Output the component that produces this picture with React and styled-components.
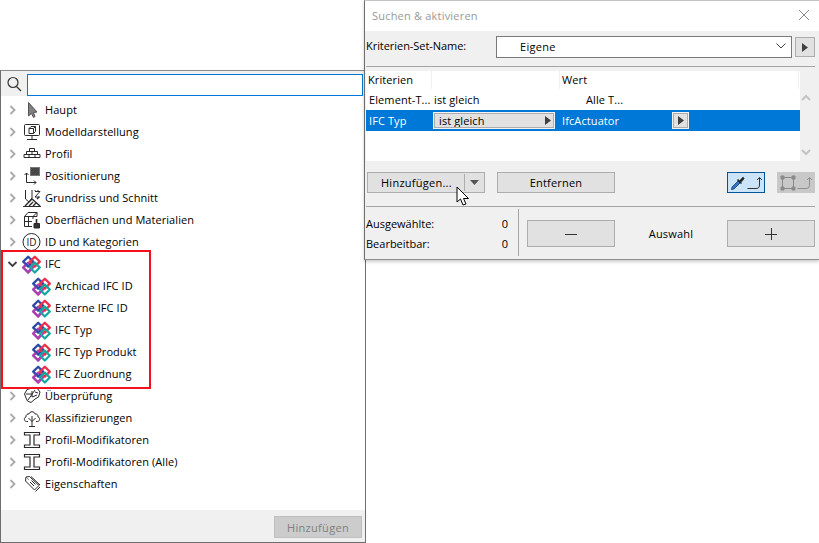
import React from "react";
import styled, { createGlobalStyle } from "styled-components";

const Global = createGlobalStyle`
  html, body { margin: 0; padding: 0; background: #fff; }
  body { font-family: "Open Sans", "Noto Sans", sans-serif; font-size: 11px; color: #000; }
`;

const Desk = styled.div`
  position: relative; width: 819px; height: 543px; overflow: hidden; background: #fff;
`;

/* ---------- left window ---------- */
const Panel = styled.section`
  position: absolute; left: 0; top: 70px; width: 366px; height: 473px; box-sizing: border-box;
  display: flex; flex-direction: column; background: #fff;
  border: 1px solid #6e6e6e; border-top-color: #8a8a8a;
`;
const SearchBar = styled.div`
  height: 25px; flex: none; display: flex; align-items: flex-start; background: #f0f0f0;
`;
const SearchIconBox = styled.div`
  width: 26px; height: 25px; display: flex; align-items: center; justify-content: center;
`;
const SearchInput = styled.div`
  width: 336px; height: 22px; box-sizing: border-box; margin-top: 3px; background: #fff; border: 1px solid #0078d7;
`;
const Tree = styled.div`
  flex: 1; padding-top: 3px; display: flex; flex-direction: column;
`;
const Row = styled.div`
  height: 22px; flex: none; display: flex; align-items: center; padding-left: ${p => (p.$child ? 31 : 6)}px;
  white-space: nowrap; letter-spacing: 0.06px;
`;
const RowLabel = styled.span`
  margin-bottom: 2px;
`;
const Chevron = styled.span`
  width: 12px; height: 12px; display: flex; flex: none; margin-right: 3px;
`;
const IconSlot = styled.span`
  width: 20px; height: 20px; flex: none; display: flex; align-items: center; justify-content: center; margin-right: 3px;
`;
const Group = styled.div`
  position: relative;
`;
const RedFrame = styled.div`
  position: absolute; left: 0; top: -3px; width: 150px; height: 139px; box-sizing: border-box;
  border: 2px solid #f5101c; pointer-events: none;
`;
const PanelFooter = styled.div`
  height: 32px; box-sizing: border-box; flex: none; background: #f0f0f0; display: flex; justify-content: flex-end; align-items: flex-start; padding: 6px 3px 0 0;
`;
const DisabledButton = styled.div`
  width: 88px; height: 22px; box-sizing: border-box; background: #cccccc; border: 1px solid #bfbfbf; color: #7f7f7f;
  display: flex; align-items: center; justify-content: center; letter-spacing: .3px;
`;

/* ---------- right window ---------- */
const Dialog = styled.section`
  position: absolute; left: 364px; top: 0; width: 455px; height: 260px; box-sizing: border-box;
  display: flex; flex-direction: column; background: #f0f0f0;
  border-left: 1px solid #6e6e6e; border-top: 1px solid #c4c4c4; border-bottom: 1px solid #8e8e8e;
  box-shadow: 0 2px 3px rgba(0,0,0,.2);
`;
const TitleBar = styled.header`
  height: 30px; flex: none; background: #fff; display: flex; align-items: center; justify-content: space-between;
  padding: 0 9px 2px 7px; box-sizing: border-box; color: #999; letter-spacing: .2px;
`;
const NameRow = styled.div`
  height: 35px; box-sizing: border-box; flex: none; display: flex; align-items: flex-start; padding: 5px 0 0 1px;
`;
const NameLabel = styled.span`
  width: 130px; flex: none; line-height: 20px; letter-spacing: -.05px;
`;
const Select = styled.div`
  width: 296px; height: 22px; box-sizing: border-box; background: #fff; border: 1px solid #7a7a7a; flex: none;
  display: flex; align-items: center; justify-content: space-between; padding: 0 5px 2px 23px; letter-spacing: .3px;
`;
const SquareButton = styled.div`
  width: 20px; height: 20px; box-sizing: border-box; margin: 1px 0 0 3px; background: #e1e1e1; border: 1px solid #adadad;
  display: flex; align-items: center; justify-content: center;
`;
const Rule = styled.div`
  height: 1px; flex: none; margin: 0 4px 0 1px; background: #a5a5a5;
`;
const TableWrap = styled.div`
  height: 90px; margin: 4px 0 0 1px; flex: none; display: flex;
`;
const Table = styled.div`
  width: 434px; flex: none; background: #fff; display: flex; flex-direction: column;
`;
const HeaderRow = styled.div`
  height: 18px; flex: none; display: grid; grid-template-columns: 66px 128px 1fr; width: 433px;
`;
const HeaderCell = styled.div`
  box-sizing: border-box; padding: 0 0 1px 2px; display: flex; align-items: center; border-right: 1px solid #f0f0f0;
  letter-spacing: .1px;
`;
const BodyRow = styled.div`
  height: 21px; flex: none; display: grid; grid-template-columns: 66px 128px 1fr; align-items: center;
  background: ${p => (p.$selected ? "#0078d7" : "#fff")}; color: ${p => (p.$selected ? "#fff" : "#000")};
  letter-spacing: .1px;
`;
const Cell = styled.div`
  padding-left: ${p => p.$pad ?? 3}px; white-space: nowrap; display: flex; align-items: center;
`;
const CellButton = styled.div`
  width: 122px; height: 17px; box-sizing: border-box; margin-left: 1px; background: #e1e1e1; border: 1px solid #f4f4f4; outline: 1px solid #adadad; outline-offset: -2px;
  color: #000; display: flex; align-items: center; justify-content: space-between; padding: 0 3px 1px 5px; 
`;
const ArrowButton = styled.div`
  width: 17px; height: 17px; box-sizing: border-box; margin-left: 53px; background: #e1e1e1; border: 1px solid #f4f4f4; outline: 1px solid #adadad; outline-offset: -2px;
  display: flex; align-items: center; justify-content: center;
`;
const ScrollTrack = styled.div`
  flex: 1; display: flex; flex-direction: column; justify-content: space-between; align-items: center; padding: 23px 8px 5px 0; box-sizing: border-box;
`;
const ActionRow = styled.div`
  height: 45px; box-sizing: border-box; flex: none; display: flex; align-items: flex-start; padding: 11px 0 0 2px; position: relative;
`;
const ActionButton = styled.div`
  width: 118px; height: 21px; box-sizing: border-box; background: #e1e1e1; border: 1px solid #adadad; flex: none;
  display: flex; align-items: center; justify-content: center; margin-right: 12px; letter-spacing: .2px; padding-bottom: 1px;
`;
const SplitLabel = styled.span`
  width: 96px; flex: none; box-sizing: border-box; padding-left: 13px; letter-spacing: .25px;
`;
const SplitDivider = styled.span`
  width: 1px; height: 17px; background: #adadad; flex: none;
`;
const SplitArrow = styled.span`
  flex: 1; display: flex; justify-content: center;
`;
const SplitButton = styled(ActionButton)`
  justify-content: flex-start;
`;
const ToolButton = styled.div`
  width: 38px; height: 21px; box-sizing: border-box; flex: none; display: flex; align-items: center; justify-content: space-between; padding: 0 1px 0 2px;
  margin-left: ${p => p.$gap}px;
  background: ${p => (p.$on ? "#cce4f7" : "#c8c8c8")}; border: 1px solid ${p => (p.$on ? "#005499" : "#c8c8c8")};
`;
const CursorMark = styled.svg`
  position: absolute; left: 91px; top: 25px;
`;
const StatusRow = styled.div`
  flex: 1; display: flex; align-items: flex-start; padding-left: 1px;
`;
const Stats = styled.div`
  width: 153px; height: 47px; flex: none; box-sizing: border-box; margin-top: 2px; padding: 5px 10px 0 0; border-right: 1px solid #a5a5a5;
  display: flex; flex-direction: column;
`;
const StatLine = styled.div`
  height: 20px; flex: none; display: flex; align-items: center; justify-content: space-between; padding-bottom: 1px; box-sizing: border-box;
`;
const WideButton = styled.div`
  width: 88px; height: 27px; box-sizing: border-box; background: #e1e1e1; border: 1px solid #adadad; flex: none; margin-top: 13px;
  display: flex; align-items: center; justify-content: center;
`;
const SelectionLabel = styled.div`
  width: 112px; flex: none; text-align: center; margin-top: 19px; letter-spacing: .2px;
`;
const Spacer = styled.div`
  width: 8px; flex: none;
`;
const LogoSvg = styled.svg`
  margin-right: 2px; flex: none;
`;

/* ---------- drawings ---------- */
const ChevronIcon = ({ open }) => (
  <svg width="12" height="12" viewBox="0 0 12 12" fill="none">
    {open
      ? <path d="M1.5 4 L5.5 8 L9.5 4" stroke="#404040" strokeWidth="1.8" />
      : <path d="M3.5 2 L7.5 6 L3.5 10" stroke="#a9a9a9" strokeWidth="1.8" />}
  </svg>
);

const Tri = ({ c = "#404040" }) => (
  <svg width="6" height="9" viewBox="0 0 6 9"><path d="M0 0 L6 4.5 L0 9 Z" fill={c} /></svg>
);

const IfcLogo = () => (
  <LogoSvg width="19" height="19" viewBox="0 0 20 20" fill="none" strokeWidth="2.4" strokeLinejoin="round">
    <path d="M6.5 1.8 L11.7 7 L6.5 12.2 L1.3 7 Z" stroke="#ad3fb0" transform="translate(0 6.2)" />
    <path d="M6.5 1.8 L11.7 7 L6.5 12.2 L1.3 7 Z" stroke="#2c4aa6" />
    <path d="M13.5 1.8 L18.7 7 L13.5 12.2 L8.3 7 Z" stroke="#ec2f4c" />
    <path d="M13.5 8 L18.7 13.2 L13.5 18.4 L8.3 13.2 Z" stroke="#16a8a0" />
    <path d="M8.6 15 L6.5 18.4 L1.3 13.2 L4 10.5" stroke="#ad3fb0" />
  </LogoSvg>
);

const S = { stroke: "#2a2a2a", strokeWidth: 1, fill: "none" };
const icons = {
  cursor: <svg width="18" height="18" viewBox="0 0 18 18"><path d="M5.5 1.5 V15 L8.5 12.5 L10.5 16.5 L12 15.5 L10.5 11.5 L14 11 Z" fill="#808080" stroke="#555" /></svg>,
  model: <svg width="18" height="18" viewBox="0 0 18 18" {...S}><rect x="1.5" y="1.5" width="15" height="11" rx="1" /><path d="M6 10.5 V5.5 L8 3.5 H12.5 V8.5 L10.5 10.5 H6 M6 5.5 H10.5 V10.5 M10.5 5.5 L12.5 3.5 M9 12.5 V16 M4 16.5 H14" /></svg>,
  profile: <svg width="18" height="18" viewBox="0 0 18 18" {...S}><path d="M6.5 3.5 H11.5 V6.5 H6.5 Z M3.5 6.5 H14.5 V9.5 H3.5 Z M9 6.5 V9.5 M1 12.5 V9.5 H17 V12.5 Z M6 9.5 V12.5 M12 9.5 V12.5" /></svg>,
  position: <svg width="18" height="18" viewBox="0 0 18 18" {...S}>
    <defs><pattern id="h" width="2" height="2" patternUnits="userSpaceOnUse"><rect width="2" height="2" fill="#aaa" /><path d="M0 2 L2 0" stroke="#444" strokeWidth=".8" /></pattern></defs>
    <rect x="7.5" y="0.5" width="9" height="8" fill="url(#h)" stroke="#777" /><path d="M3.5 15.5 V6 M1.5 8 L3.5 6 L5.5 8 M3.5 15.5 H13 M11 13.5 L13 15.5 L11 17.5" /></svg>,
  plan: <svg width="18" height="18" viewBox="0 0 18 18" {...S}><path d="M2.5 1 V10 L6 13 L9 9 V1 M0 17.5 H18" /><path d="M12 2.5 H17 L12 8 H17" /><path d="M12 2 V0.5 M15 2 V0.5" strokeDasharray="1 1" /><path d="M2 17 L9 10 L17 17 M6 17 L10 13 M10 17 L13 14 M14 10 L16 8" strokeWidth="1.4" /></svg>,
  surface: <svg width="18" height="18" viewBox="0 0 18 18" {...S}><path d="M1.5 5.5 L5 1.5 H14 V5.5 H1.5 Z M1.5 5.5 V15.5 H9 M1.5 10.5 H9 M5.5 5.5 V10.5 M10 5.5 V8 M5.5 10.5 V15.5 M14 1.5 L10 5.5" /><path d="M11 12.5 H16.5 V17 H11 Z" fill="#333" /><path d="M13.5 12 V8" strokeWidth="1.6" /></svg>,
  id: <svg width="20" height="20" viewBox="0 0 20 20"><circle cx="9.5" cy="10" r="8.5" fill="none" stroke="#2a2a2a" /><text x="9.5" y="13.6" textAnchor="middle" fontFamily="Open Sans" fontSize="10" fill="#222">ID</text></svg>,
  check: <svg width="18" height="18" viewBox="0 0 18 18" {...S}><path d="M1.5 7 L4 2.5 L9 1 H14 L17 5 L15.5 10 L12 12 L8 15.5 L4.5 14 L3 11 Z M5 13 L12 3 M3 7 H9 M9 4 V10 M9 10 L14 8 M12 5 L15 6" /></svg>,
  tree: <svg width="18" height="18" viewBox="0 0 18 18" {...S}><path d="M5 12.5 H3.5 C1 12.5 .5 8.5 3 8 C2.5 5.5 5 4.5 6 5 C6.5 2 11.5 2 12 5 C14 4.5 15.5 6.5 15 8 C17.5 8.5 17 12.5 14.5 12.5 H13 M9 17 V7 M5.5 9 L9 12.5 L12.5 9 M6 17.5 H12" /></svg>,
  beam: <svg width="18" height="18" viewBox="0 0 18 18" {...S}><path d="M1.5 1.5 H16.5 V4 H11 V14 H16.5 V16.5 H1.5 V14 H7 V4 H1.5 Z" strokeWidth="1.2" /></svg>,
  tags: <svg width="18" height="18" viewBox="0 0 18 18" {...S}><path d="M3 2 L6.5 1.5 L16 10.5 L11.5 15 L2.5 6 Z M8 1.5 L17 10 M17 12 L12.5 16.5 M4.5 3.5 L5.5 4.5 M7 7 L11 11 M8.5 5.5 L12.5 9.5" /></svg>,
};

const Item = ({ icon, label, open, child }) => (
  <Row $child={child}>
    {!child && <Chevron><ChevronIcon open={open} /></Chevron>}
    <IconSlot>{icon}</IconSlot>
    <RowLabel>{label}</RowLabel>
  </Row>
);

const before = [
  ["cursor", "Haupt"], ["model", "Modelldarstellung"], ["profile", "Profil"], ["position", "Positionierung"],
  ["plan", "Grundriss und Schnitt"], ["surface", "Oberflächen und Materialien"], ["id", "ID und Kategorien"],
];
const ifcKids = ["Archicad IFC ID", "Externe IFC ID", "IFC Typ", "IFC Typ Produkt", "IFC Zuordnung"];
const after = [
  ["check", "Überprüfung"], ["tree", "Klassifizierungen"], ["beam", "Profil-Modifikatoren"],
  ["beam", "Profil-Modifikatoren (Alle)"], ["tags", "Eigenschaften"],
];

const SnapIcon = ({ c = "#333" }) => (
  <svg width="16" height="16" viewBox="0 0 16 16" fill="none" stroke={c} strokeWidth="1">
    <path d="M0.5 13.5 H9 C12 13.5 12.5 12 12.5 9 V2.5 M10 5 L12.5 2.5 L15 5" />
  </svg>
);

export default function App() {
  return (
    <Desk>
      <Global />
      <Panel>
        <SearchBar>
          <SearchIconBox>
            <svg width="16" height="16" viewBox="0 0 16 16" fill="none" stroke="#333" strokeWidth="1.2">
              <circle cx="7" cy="6.5" r="5" /><path d="M10.5 10.5 L15 15" />
            </svg>
          </SearchIconBox>
          <SearchInput />
        </SearchBar>
        <Tree>
          {before.map(([k, l]) => <Item key={l} icon={icons[k]} label={l} />)}
          <Group>
            <RedFrame />
            <Item open icon={<IfcLogo />} label="IFC" />
            {ifcKids.map(l => <Item key={l} child icon={<IfcLogo />} label={l} />)}
          </Group>
          {after.map(([k, l]) => <Item key={l} icon={icons[k]} label={l} />)}
        </Tree>
        <PanelFooter><DisabledButton>Hinzufügen</DisabledButton></PanelFooter>
      </Panel>

      <Dialog>
        <TitleBar>
          <span>Suchen &amp; aktivieren</span>
          <svg width="12" height="12" viewBox="0 0 12 12" stroke="#8c8c8c" strokeWidth="1"><path d="M1 1 L11 11 M11 1 L1 11" /></svg>
        </TitleBar>
        <NameRow>
          <NameLabel>Kriterien-Set-Name:</NameLabel>
          <Select>
            <span>Eigene</span>
            <svg width="10" height="6" viewBox="0 0 10 6" fill="none" stroke="#444"><path d="M.5 .5 L5 5 L9.5 .5" /></svg>
          </Select>
          <SquareButton><Tri /></SquareButton>
        </NameRow>
        <Rule />
        <TableWrap>
          <Table>
            <HeaderRow>
              <HeaderCell>Kriterien</HeaderCell>
              <HeaderCell />
              <HeaderCell>Wert</HeaderCell>
            </HeaderRow>
            <BodyRow>
              <Cell>Element-T...</Cell>
              <Cell $pad={2}>ist gleich</Cell>
              <Cell $pad={26}>Alle T...</Cell>
            </BodyRow>
            <BodyRow $selected>
              <Cell>IFC Typ</Cell>
              <Cell $pad={0}><CellButton>ist gleich<Tri /></CellButton></Cell>
              <Cell $pad={2}>IfcActuator<ArrowButton><Tri /></ArrowButton></Cell>
            </BodyRow>
          </Table>
          <ScrollTrack>
            <svg width="10" height="7" viewBox="0 0 10 7" fill="none" stroke="#c4c4c4" strokeWidth="2"><path d="M1 6 L5 2 L9 6" /></svg>
            <svg width="10" height="7" viewBox="0 0 10 7" fill="none" stroke="#c4c4c4" strokeWidth="2"><path d="M1 1 L5 5 L9 1" /></svg>
          </ScrollTrack>
        </TableWrap>
        <ActionRow>
          <SplitButton>
            <SplitLabel>Hinzufügen...</SplitLabel>
            <SplitDivider />
            <SplitArrow><svg width="9" height="5" viewBox="0 0 9 5"><path d="M0 0 H9 L4.5 5 Z" fill="#555" /></svg></SplitArrow>
          </SplitButton>
          <ActionButton>Entfernen</ActionButton>
          <ToolButton $on $gap={100}>
            <svg width="16" height="16" viewBox="0 0 16 16" fill="none">
              <path d="M1.5 14.5 L2 12 L8 6 L10 8 L4 14 Z" fill="#2e75c5" stroke="#1d3f6e" strokeWidth=".8" />
              <path d="M7.5 4.5 L11.5 8.5 M10 6 L13 3 L13.5 3.5 L11 6.5" stroke="#222" strokeWidth="1.6" />
            </svg>
            <SnapIcon />
          </ToolButton>
          <ToolButton $gap={12}>
            <svg width="16" height="16" viewBox="0 0 16 16" fill="none" stroke="#8a8a8a">
              <rect x="2.5" y="2.5" width="11" height="11" />
              <path d="M1 1 h3 v3 h-3 z M12 1 h3 v3 h-3 z M1 12 h3 v3 h-3 z M12 12 h3 v3 h-3 z" fill="#8a8a8a" />
            </svg>
            <SnapIcon c="#8f8f8f" />
          </ToolButton>
          <CursorMark width="16" height="21" viewBox="0 0 16 21">
            <path d="M1 1 V16 L4.5 13 L7 19 L10 18 L7.5 12.5 L12.5 12.5 Z" fill="#fff" stroke="#000" />
          </CursorMark>
        </ActionRow>
        <Rule />
        <StatusRow>
          <Stats>
            <StatLine><span>Ausgewählte:</span><span>0</span></StatLine>
            <StatLine><span>Bearbeitbar:</span><span>0</span></StatLine>
          </Stats>
          <Spacer />
          <WideButton>
            <svg width="14" height="14" viewBox="0 0 14 14" stroke="#333"><path d="M1 7.5 H13" /></svg>
          </WideButton>
          <SelectionLabel>Auswahl</SelectionLabel>
          <WideButton>
            <svg width="14" height="14" viewBox="0 0 14 14" stroke="#333"><path d="M1 7.5 H13 M7.5 1 V13" /></svg>
          </WideButton>
        </StatusRow>
      </Dialog>
    </Desk>
  );
}
